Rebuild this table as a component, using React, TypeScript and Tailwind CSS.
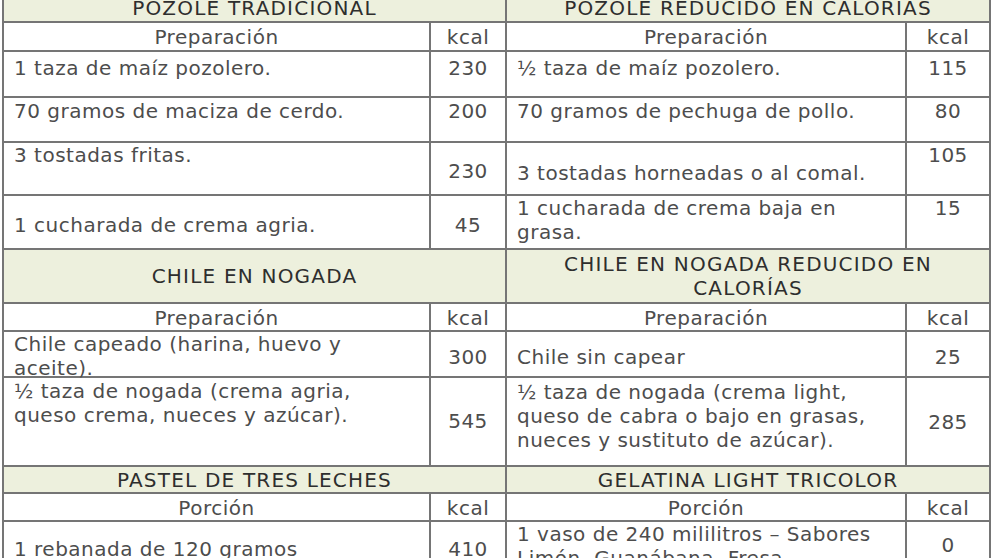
import React from 'react';

type Cell = {
  text: React.ReactNode;
  kind: 'head' | 'sub' | 'body' | 'num';
  pad: string;
};

type Row = { h: string; cells: Cell[] };

const rows: Row[] = [
  {
    h: 'h-[27px]',
    cells: [
      { text: 'POZOLE TRADICIONAL', kind: 'head', pad: 'pt-[0px]' },
      { text: 'POZOLE REDUCIDO EN CALORIAS', kind: 'head', pad: 'pt-[0px]' },
    ],
  },
  {
    h: 'h-[29px]',
    cells: [
      { text: 'Preparación', kind: 'sub', pad: 'pt-[2px]' },
      { text: 'kcal', kind: 'sub', pad: 'pt-[2px]' },
      { text: 'Preparación', kind: 'sub', pad: 'pt-[2px]' },
      { text: 'kcal', kind: 'sub', pad: 'pt-[2px]' },
    ],
  },
  {
    h: 'h-[46px]',
    cells: [
      { text: '1 taza de maíz pozolero.', kind: 'body', pad: 'pt-[4px]' },
      { text: '230', kind: 'num', pad: 'pt-[4px]' },
      { text: '½ taza de maíz pozolero.', kind: 'body', pad: 'pt-[4px]' },
      { text: '115', kind: 'num', pad: 'pt-[4px]' },
    ],
  },
  {
    h: 'h-[45px]',
    cells: [
      { text: '70 gramos de maciza de cerdo.', kind: 'body', pad: 'pt-[1px]' },
      { text: '200', kind: 'num', pad: 'pt-[1px]' },
      { text: '70 gramos de pechuga de pollo.', kind: 'body', pad: 'pt-[1px]' },
      { text: '80', kind: 'num', pad: 'pt-[1px]' },
    ],
  },
  {
    h: 'h-[53px]',
    cells: [
      { text: '3 tostadas fritas.', kind: 'body', pad: 'pt-[0px]' },
      { text: '230', kind: 'num', pad: 'pt-[16px]' },
      { text: '3 tostadas horneadas o al comal.', kind: 'body', pad: 'pt-[18px]' },
      { text: '105', kind: 'num', pad: 'pt-[0px]' },
    ],
  },
  {
    h: 'h-[54px]',
    cells: [
      { text: '1 cucharada de crema agria.', kind: 'body', pad: 'pt-[17px]' },
      { text: '45', kind: 'num', pad: 'pt-[17px]' },
      {
        text: (
          <>
            1 cucharada de crema baja en
            <br />
            grasa.
          </>
        ),
        kind: 'body',
        pad: 'pt-[0px]',
      },
      { text: '15', kind: 'num', pad: 'pt-[0px]' },
    ],
  },
  {
    h: 'h-[54px]',
    cells: [
      { text: 'CHILE EN NOGADA', kind: 'head', pad: 'pt-[14px]' },
      {
        text: (
          <>
            CHILE EN NOGADA REDUCIDO EN
            <br />
            CALORÍAS
          </>
        ),
        kind: 'head',
        pad: 'pt-[2px]',
      },
    ],
  },
  {
    h: 'h-[28px]',
    cells: [
      { text: 'Preparación', kind: 'sub', pad: 'pt-[2px]' },
      { text: 'kcal', kind: 'sub', pad: 'pt-[2px]' },
      { text: 'Preparación', kind: 'sub', pad: 'pt-[2px]' },
      { text: 'kcal', kind: 'sub', pad: 'pt-[2px]' },
    ],
  },
  {
    h: 'h-[46px]',
    cells: [
      {
        text: (
          <>
            Chile capeado (harina, huevo y
            <br />
            aceite).
          </>
        ),
        kind: 'body',
        pad: 'pt-[0px]',
      },
      { text: '300', kind: 'num', pad: 'pt-[13px]' },
      { text: 'Chile sin capear', kind: 'body', pad: 'pt-[13px]' },
      { text: '25', kind: 'num', pad: 'pt-[13px]' },
    ],
  },
  {
    h: 'h-[89px]',
    cells: [
      {
        text: (
          <>
            ½ taza de nogada (crema agria,
            <br />
            queso crema, nueces y azúcar).
          </>
        ),
        kind: 'body',
        pad: 'pt-[1px]',
      },
      { text: '545', kind: 'num', pad: 'pt-[31px]' },
      {
        text: (
          <>
            ½ taza de nogada (crema light,
            <br />
            queso de cabra o bajo en grasas,
            <br />
            nueces y sustituto de azúcar).
          </>
        ),
        kind: 'body',
        pad: 'pt-[2px]',
      },
      { text: '285', kind: 'num', pad: 'pt-[32px]' },
    ],
  },
  {
    h: 'h-[27px]',
    cells: [
      { text: 'PASTEL DE TRES LECHES', kind: 'head', pad: 'pt-[1px]' },
      { text: 'GELATINA LIGHT TRICOLOR', kind: 'head', pad: 'pt-[1px]' },
    ],
  },
  {
    h: 'h-[28px]',
    cells: [
      { text: 'Porción', kind: 'sub', pad: 'pt-[2px]' },
      { text: 'kcal', kind: 'sub', pad: 'pt-[2px]' },
      { text: 'Porción', kind: 'sub', pad: 'pt-[2px]' },
      { text: 'kcal', kind: 'sub', pad: 'pt-[2px]' },
    ],
  },
  {
    h: 'h-[60px]',
    cells: [
      { text: '1 rebanada de 120 gramos', kind: 'body', pad: 'pt-[15px]' },
      { text: '410', kind: 'num', pad: 'pt-[15px]' },
      {
        text: (
          <>
            1 vaso de 240 mililitros – Sabores
            <br />
            Limón, Guanábana, Fresa
          </>
        ),
        kind: 'body',
        pad: 'pt-[0px]',
      },
      { text: '0', kind: 'num', pad: 'pt-[11px]' },
    ],
  },
];

// header rows span kcal + description columns
const kindClass: Record<Cell['kind'], string> = {
  head: 'col-span-2 bg-[#edf0dd] text-center text-[#2e2e2e] tracking-[1.2px]',
  sub: 'text-center text-[#4d4d4d] tracking-[0.5px]',
  body: 'pl-[10px] text-left text-[#4d4d4d] tracking-[0.5px]',
  num: 'text-center text-[#4d4d4d] tracking-[0.5px]',
};

export default function App() {
  return (
    <div className="h-[558px] w-[992px] overflow-hidden bg-white">
      <div
        className="-mt-[6px] ml-[2px] grid w-[989px] grid-cols-[427px_76px_400px_84px] border-l-2 border-t-2 border-[#757575] text-[20px] leading-[24px]"
        style={{ fontFamily: '"DejaVu Sans", "Open Sans", sans-serif' }}
      >
        {rows.map((row, ri) =>
          row.cells.map((cell, ci) => (
            <div
              key={`${ri}-${ci}`}
              className={`${row.h} ${kindClass[cell.kind]} ${cell.pad} overflow-visible whitespace-nowrap border-b-2 border-r-2 border-[#757575]`}
            >
              {cell.text}
            </div>
          ))
        )}
      </div>
    </div>
  );
}
